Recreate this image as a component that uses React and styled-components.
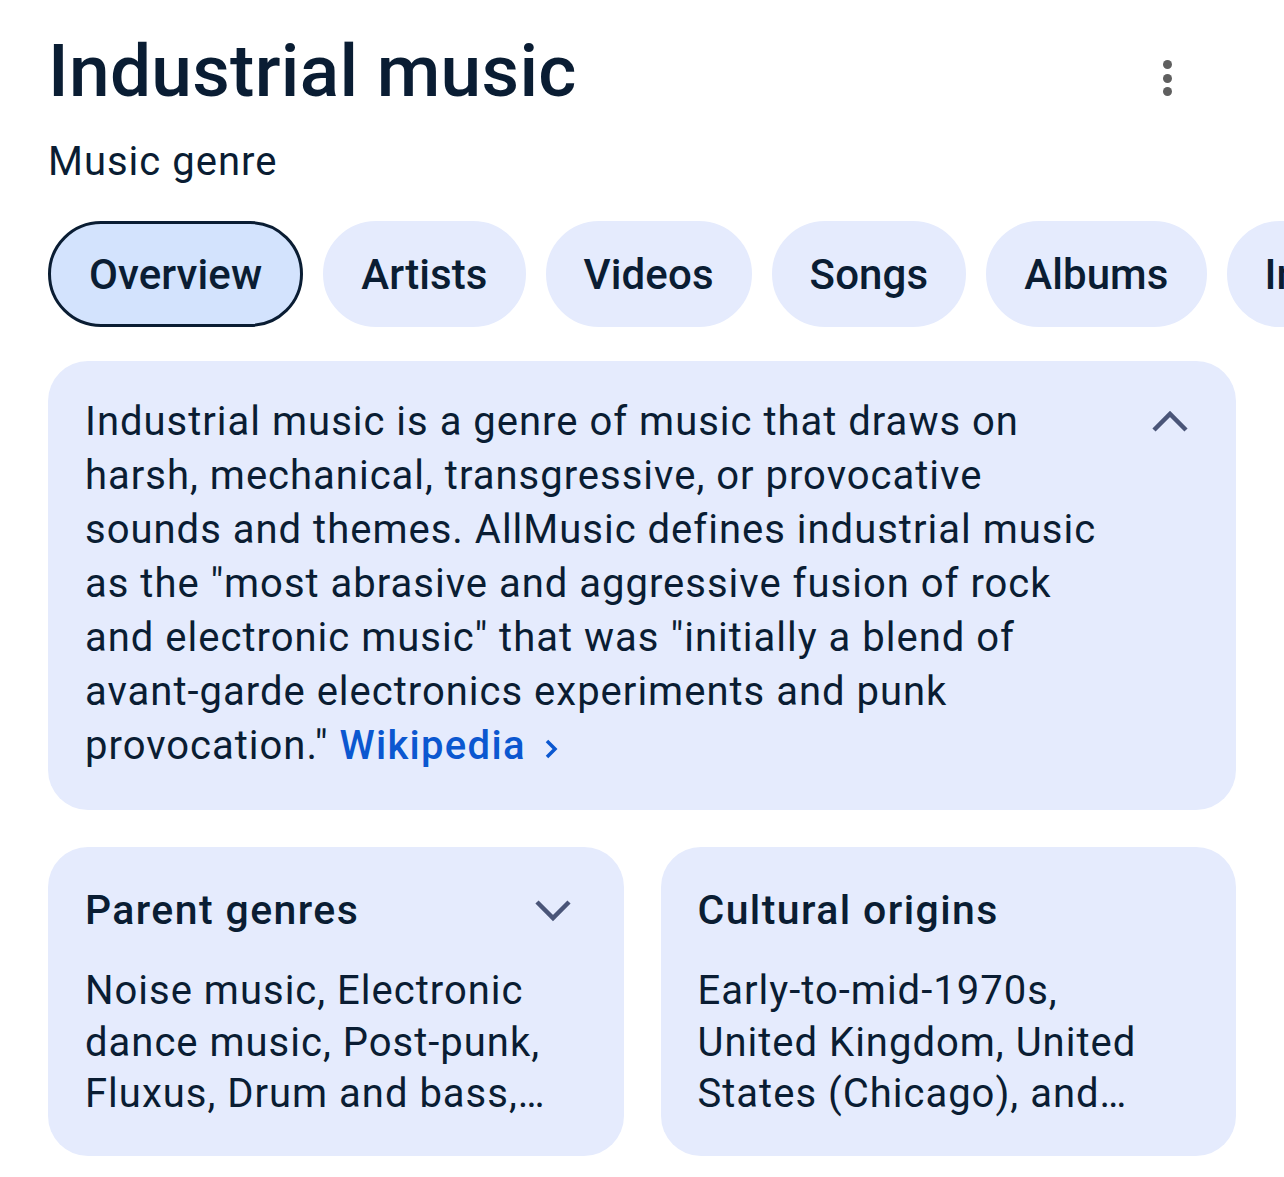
import styled, { createGlobalStyle } from 'styled-components';

const Global = createGlobalStyle`
  html, body { margin: 0; padding: 0; background: #fff; overflow: hidden; }
  body { font-family: Roboto, "Noto Sans", sans-serif; color: #0a1d33; }
`;

const Page = styled.div`
  width: 1284px;
  padding: 28px 48px 0 48px;
  box-sizing: border-box;
`;

const Header = styled.div`
  display: flex;
  justify-content: space-between;
  align-items: flex-start;
`;

const Title = styled.h1`
  margin: 0;
  font-size: 73px;
  font-weight: 500;
  line-height: 86px;
  letter-spacing: 0.3px;
`;

const Dots = styled.div`
  display: flex;
  flex-direction: column;
  gap: 4.5px;
  margin: 32px 64px 0 0;
  span {
    width: 9px;
    height: 9px;
    border-radius: 50%;
    background: #5f5f5f;
  }
`;

const Subtitle = styled.div`
  font-size: 40px;
  line-height: 48px;
  margin-top: 24px;
  letter-spacing: 1px;
`;

const Tabs = styled.div`
  display: flex;
  gap: 20px;
  margin-top: 35px;
  white-space: nowrap;
  margin-right: -48px;
  overflow: hidden;
`;

const Tab = styled.div`
  flex: none;
  height: 106px;
  box-sizing: border-box;
  padding: 0 ${p => (p.$active ? 38 : 35)}px;
  border-radius: 53px;
  display: flex;
  align-items: center;
  font-size: 42px;
  font-weight: 500;
  letter-spacing: 0.1px;
  background: ${p => (p.$active ? '#d3e3fd' : '#e5ebfd')};
  border: 3px solid ${p => (p.$active ? '#0a1d33' : '#e5ebfd')};
`;

const Card = styled.div`
  background: #e5ebfd;
  border-radius: 40px;
  box-sizing: border-box;
`;

const About = styled(Card)`
  margin-top: 34px;
  padding: 34px 46px 37px 37px;
  display: flex;
  justify-content: space-between;
  align-items: flex-start;
`;

const AboutText = styled.p`
  margin: 0;
  font-size: 40px;
  line-height: 54px;
  letter-spacing: 1px;
  white-space: nowrap;
`;

const Link = styled.a`
  color: #0b57d0;
  font-weight: 500;
  letter-spacing: 1.3px;
  text-decoration: none;
  svg { margin-left: 18px; vertical-align: -3px; }
`;

const Chevron = styled.svg`
  flex: none;
  width: 40px;
  height: 40px;
  margin-top: ${p => p.$top || 0}px;
`;

const Grid = styled.div`
  display: grid;
  grid-template-columns: 1fr 1fr;
  gap: 37px;
  margin-top: 37px;
`;

const InfoCard = styled(Card)`
  padding: 38px 37px 36px 37px;
`;

const InfoHead = styled.div`
  display: flex;
  justify-content: space-between;
  align-items: center;
  height: 50px;
  padding-right: 14px;
`;

const InfoTitle = styled.div`
  font-size: 41px;
  font-weight: 500;
  letter-spacing: 1.4px;
`;

const InfoBody = styled.div`
  margin-top: 30px;
  font-size: 40px;
  line-height: 51.5px;
  letter-spacing: 1px;
  white-space: nowrap;
  height: 155px;
  overflow: hidden;
`;

const ChevronIcon = ({ dir, top }) => (
  <Chevron $top={top} viewBox="0 0 40 40">
    <path
      d={dir === 'up' ? 'M4 28 L20 12 L36 28' : 'M4 12 L20 28 L36 12'}
      fill="none"
      stroke="#4a5578"
      strokeWidth="4.5"
    />
  </Chevron>
);

const tabs = ['Overview', 'Artists', 'Videos', 'Songs', 'Albums', 'Info'];

export default function App() {
  return (
    <Page>
      <Global />
      <Header>
        <Title>Industrial music</Title>
        <Dots><span /><span /><span /></Dots>
      </Header>
      <Subtitle>Music genre</Subtitle>
      <Tabs>
        {tabs.map((t, i) => (
          <Tab key={t} $active={i === 0}>{t}</Tab>
        ))}
      </Tabs>
      <About>
        <AboutText>
          Industrial music is a genre of music that draws on<br />
          harsh, mechanical, transgressive, or provocative<br />
          sounds and themes. AllMusic defines industrial music<br />
          as the "most abrasive and aggressive fusion of rock<br />
          and electronic music" that was "initially a blend of<br />
          avant-garde electronics experiments and punk<br />
          provocation."{' '}
          <Link>
            Wikipedia
            <svg width="16" height="26" viewBox="0 0 16 26">
              <path d="M3 5 L11 13 L3 21" fill="none" stroke="#0b57d0" strokeWidth="3.5" />
            </svg>
          </Link>
        </AboutText>
        <ChevronIcon dir="up" top={7} />
      </About>
      <Grid>
        <InfoCard>
          <InfoHead>
            <InfoTitle>Parent genres</InfoTitle>
            <ChevronIcon dir="down" />
          </InfoHead>
          <InfoBody>
            Noise music, Electronic<br />
            dance music, Post-punk,<br />
            Fluxus, Drum and bass,…
          </InfoBody>
        </InfoCard>
        <InfoCard>
          <InfoHead>
            <InfoTitle>Cultural origins</InfoTitle>
          </InfoHead>
          <InfoBody>
            Early-to-mid-1970s,<br />
            United Kingdom, United<br />
            States (Chicago), and…
          </InfoBody>
        </InfoCard>
      </Grid>
    </Page>
  );
}
